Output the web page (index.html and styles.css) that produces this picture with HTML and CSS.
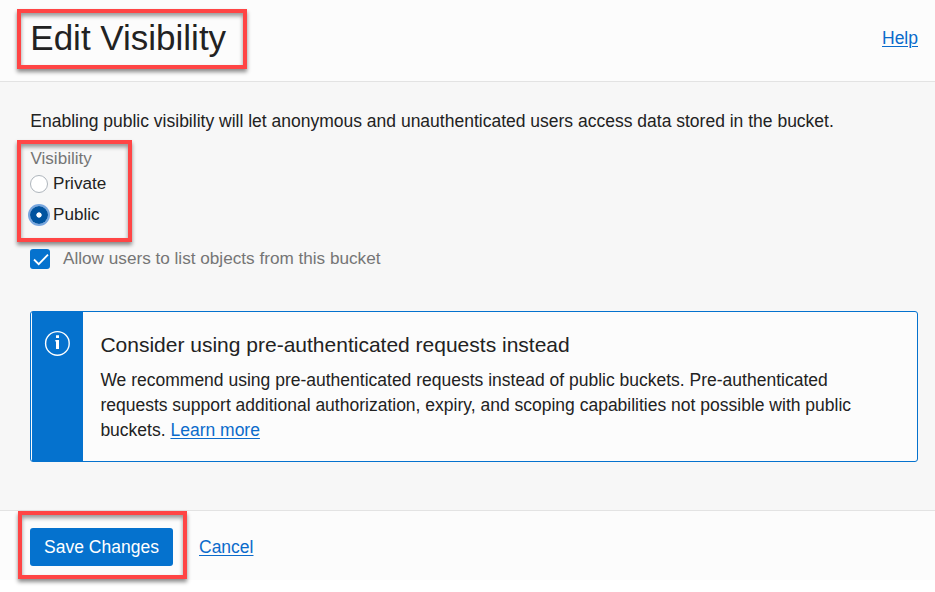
FILE: index.html
```html
<!DOCTYPE html>
<html lang="en">
<head>
<meta charset="utf-8">
<title>Edit Visibility</title>
<link rel="stylesheet" href="styles.css">
</head>
<body>
<main class="dialog">
  <header class="header">
    <div class="mark title-mark"><h1 class="title">Edit Visibility</h1></div>
    <a class="link help" href="#">Help</a>
  </header>
  <section class="content">
    <p class="intro">Enabling public visibility will let anonymous and unauthenticated users access data stored in the bucket.</p>
    <div class="mark choices" role="radiogroup" aria-labelledby="visibility">
      <div class="label" id="visibility">Visibility</div>
      <div class="option"><span class="radio" role="radio" aria-checked="false"></span><span>Private</span></div>
      <div class="option public"><span class="radio selected" role="radio" aria-checked="true"></span><span>Public</span></div>
    </div>
    <div class="check-row">
      <svg class="checkbox" viewBox="0 0 20 20"><rect width="20" height="20" rx="3" fill="#0572ce"/><path d="M4 10.5 8.7 15.2 18 5.6" fill="none" stroke="#fff" stroke-width="1.8"/></svg>
      <span class="check-text">Allow users to list objects from this bucket</span>
    </div>
    <aside class="notice">
      <div class="notice-side">
        <svg class="info" viewBox="0 0 26 26"><circle cx="13.4" cy="13.4" r="11.8" fill="none" stroke="#fff" stroke-width="1.4"/><path d="M12 5.3h3v2.7h-3zM11.3 10H15v9h-3v-7.6h-.7z" fill="#fff"/></svg>
      </div>
      <div class="notice-body">
        <h2 class="notice-title">Consider using pre-authenticated requests instead</h2>
        <p class="notice-text">We recommend using pre-authenticated requests instead of public buckets. Pre-authenticated<br>requests support additional authorization, expiry, and scoping capabilities not possible with public<br>buckets. <a class="link" href="#">Learn more</a></p>
      </div>
    </aside>
  </section>
  <footer class="footer">
    <div class="mark save-mark"><button class="save" type="button">Save Changes</button></div>
    <a class="link cancel" href="#">Cancel</a>
  </footer>
</main>
</body>
</html>
```

FILE: styles.css
```css
* { box-sizing: border-box; }
body {
  margin: 0;
  min-height: 592px;
  background: #fff;
  color: #222;
  font: 17.5px/25px "Liberation Sans", Arial, sans-serif;
}
h1, h2, p { margin: 0; font-weight: 400; }
.dialog { height: 592px; }
.header {
  display: flex;
  justify-content: space-between;
  height: 82px;
  padding: 9px 17px 0;
  background: #fcfcfc;
  border-bottom: 1px solid #e3e3e3;
}
.mark {
  border: 4px solid #ff4545;
  box-shadow: 0 3px 4px rgba(0,0,0,.45), inset 0 3px 4px rgba(0,0,0,.4);
}
.title-mark { width: 230px; height: 60px; padding-left: 9.3px; }
.title { font-size: 35px; line-height: 50px; white-space: nowrap; }
.link { color: #0b6bcb; text-decoration: underline; text-decoration-thickness: 1px; text-underline-offset: 2px; }
.help { margin-top: 17px; }
.content { height: 428px; padding: 27px 17px 0; background: #f7f7f7; }
.intro { margin-left: 13.3px; white-space: nowrap; }
.choices { width: 115px; height: 102px; margin-top: 6px; padding: 2px 0 0 9px; font-size: 17.1px; }
.label { padding-left: .4px; color: #757575; line-height: 26px; margin-bottom: -2px; }
.option { display: flex; align-items: center; gap: 5px; height: 27px; }
.option.public { margin-top: 4px; }
.radio { width: 18px; height: 18px; margin-top: 1px; border: 1px solid #aeb5bc; border-radius: 50%; background: #fff; }
.radio.selected { border: 0; background: radial-gradient(circle, #fff 0 2.3px, #00539f 3px); box-shadow: 0 0 0 2px #77a6df; }
.check-row { display: flex; align-items: center; gap: 13px; height: 25px; margin: 4px 0 0 13px; color: #757575; font-size: 17.16px; }
.checkbox { width: 20px; height: 20px; margin-top: 1px; }
.notice { display: flex; width: 888px; height: 151px; margin: 40px 0 0 13px; padding-left: 1px; border: 1px solid #0572ce; border-radius: 3px; background: #fcfcfc; }
.notice-side { width: 51px; padding: 18px 0 0 12px; background: #0572ce; }
.info { display: block; width: 26px; height: 26px; }
.notice-body { padding: 19px 0 0 17.4px; white-space: nowrap; }
.notice-title { font-size: 21px; line-height: 28px; }
.notice-text { margin-top: 9px; }
.footer { display: flex; height: 70px; padding-left: 18px; background: #fcfcfc; border-top: 1px solid #e3e3e3; }
.save-mark { width: 169px; height: 68px; padding: 13px 0 0 8px; }
.save { width: 143px; height: 38px; padding: 0; border: 0; border-radius: 3px; background: #0572ce; color: #fff; font: inherit; white-space: nowrap; }
.cancel { margin: 24px 0 0 12px; }
```
